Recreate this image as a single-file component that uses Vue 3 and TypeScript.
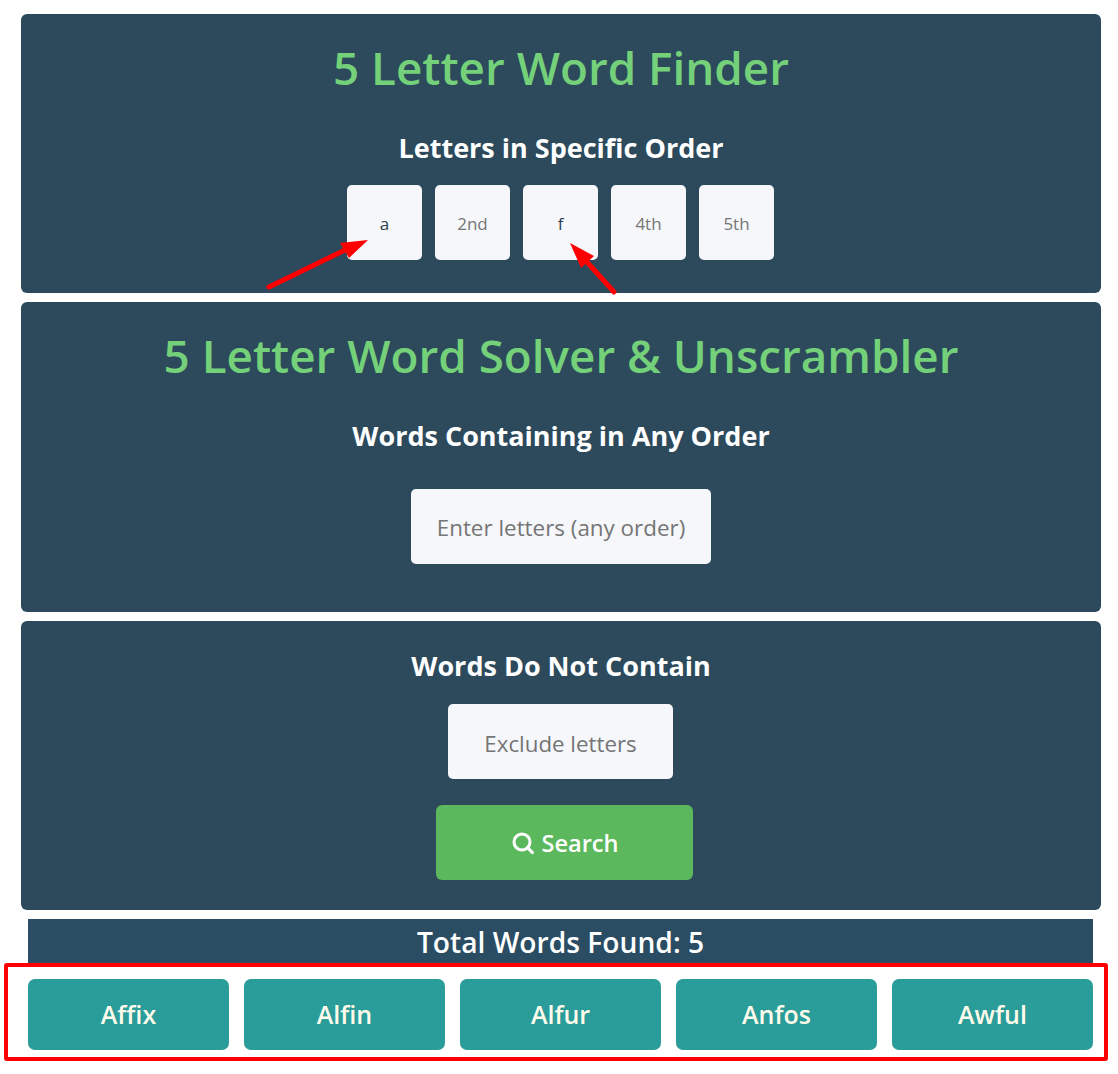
<script setup lang="ts">
interface LetterBox {
  value: string;
  placeholder: string;
}

const letters: LetterBox[] = [
  { value: 'a', placeholder: '1st' },
  { value: '', placeholder: '2nd' },
  { value: 'f', placeholder: '3rd' },
  { value: '', placeholder: '4th' },
  { value: '', placeholder: '5th' },
];

const results: string[] = ['Affix', 'Alfin', 'Alfur', 'Anfos', 'Awful'];
</script>

<template>
  <div class="page">
    <section class="card card-order">
      <h1 class="title">5 Letter Word Finder</h1>
      <h2 class="subtitle">Letters in Specific Order</h2>
      <div class="letter-row">
        <input
          v-for="(l, i) in letters"
          :key="i"
          class="field letter"
          :class="{ filled: l.value }"
          type="text"
          :value="l.value"
          :placeholder="l.placeholder"
        />
      </div>
    </section>

    <section class="card card-any">
      <h1 class="title">5 Letter Word Solver &amp; Unscrambler</h1>
      <h2 class="subtitle">Words Containing in Any Order</h2>
      <input class="field any-input" type="text" placeholder="Enter letters (any order)" />
    </section>

    <section class="card card-exclude">
      <h2 class="subtitle">Words Do Not Contain</h2>
      <input class="field exclude-input" type="text" placeholder="Exclude letters" />
      <button class="search-btn" type="button">
        <svg class="search-icon" viewBox="0 0 22 22" width="22" height="22" fill="none" stroke="currentColor" stroke-width="3">
          <circle cx="10" cy="10" r="8" />
          <path d="M15.6 15.6 L20.4 20.6" stroke-linecap="round" />
        </svg>
        Search
      </button>
    </section>

    <div class="total">Total Words Found: 5</div>

    <div class="results">
      <button v-for="word in results" :key="word" class="word" type="button">{{ word }}</button>
    </div>

    <div class="red-box"></div>
    <svg class="arrows" width="1118" height="1074" viewBox="0 0 1118 1074">
      <path d="M269 287 L345 250" stroke="#ff0000" stroke-width="5" stroke-linecap="round" />
      <polygon points="368,240 340,243 349,258" fill="#ff0000" />
      <path d="M614 292 L587 262" stroke="#ff0000" stroke-width="5" stroke-linecap="round" />
      <polygon points="570,243 594,256 581,268" fill="#ff0000" />
    </svg>
  </div>
</template>

<style>
html,
body {
  margin: 0;
  background: #ffffff;
}
</style>

<style scoped>
.page {
  position: relative;
  width: 1118px;
  height: 1074px;
  box-sizing: border-box;
  padding: 14px 17px 0 21px;
  overflow: hidden;
  font-family: "Open Sans", "Noto Sans", sans-serif;
}

.card {
  display: flex;
  flex-direction: column;
  align-items: center;
  box-sizing: border-box;
  width: 1080px;
  background: #2c4a5c;
  border-radius: 6px;
  margin-bottom: 9px;
  color: #ffffff;
}

.card-order {
  height: 279px;
  padding-top: 20px;
}

.card-any {
  height: 310px;
  padding-top: 20px;
}

.card-exclude {
  height: 289px;
  padding-top: 27px;
}

.title {
  margin: 0 0 2px;
  font-size: 45.8px;
  line-height: 67px;
  font-weight: 600;
  color: #74d17a;
}

.subtitle {
  margin: 0;
  font-size: 27px;
  line-height: 36px;
  font-weight: 700;
  color: #ffffff;
}

.card-order .subtitle {
  margin-top: 27px;
  margin-bottom: 19px;
}

.card-any .subtitle {
  margin-top: 27px;
  margin-bottom: 35px;
}

.card-exclude .subtitle {
  margin-bottom: 20px;
}

.letter-row {
  display: flex;
  gap: 13px;
  margin-left: -1px;
}

.field {
  box-sizing: border-box;
  height: 75px;
  border: none;
  outline: none;
  border-radius: 5px;
  background: #f5f7fa;
  text-align: center;
  font-family: inherit;
  color: #2c3e50;
  padding: 2px 10px 0;
}

.field::placeholder {
  color: #757575;
  opacity: 1;
}

.letter {
  width: 75px;
  font-size: 17px;
}

.any-input {
  width: 300px;
  font-size: 22.4px;
}

.exclude-input {
  width: 225px;
  font-size: 22.3px;
  margin-left: -1px;
  padding-top: 4px;
}

.search-btn {
  display: flex;
  align-items: center;
  justify-content: center;
  gap: 7px;
  width: 257px;
  height: 75px;
  padding-left: 8px;
  margin: 26px 0 0 7px;
  border: none;
  border-radius: 6px;
  background: #5cb85c;
  color: #ffffff;
  font-family: inherit;
  font-size: 23.6px;
  font-weight: 600;
}

.search-icon {
  flex: none;
}

.total {
  box-sizing: border-box;
  width: 1065px;
  height: 45px;
  margin: 0 0 15px 7px;
  background: #2a4d63;
  color: #ffffff;
  text-align: center;
  font-size: 28.2px;
  font-weight: 600;
  line-height: 47px;
}

.results {
  display: grid;
  grid-template-columns: repeat(5, 201px);
  gap: 15px;
  margin: 0 0 0 7px;
}

.word {
  height: 71px;
  padding: 0 0 2px;
  border: none;
  border-radius: 7px;
  background: #2a9c9a;
  color: #fffbea;
  font-family: inherit;
  font-size: 25px;
  font-weight: 600;
}

.red-box {
  position: absolute;
  left: 4px;
  top: 963px;
  width: 1104px;
  height: 98px;
  box-sizing: border-box;
  border: 4px solid #ff0000;
  border-radius: 3px;
  pointer-events: none;
}

.arrows {
  position: absolute;
  left: 0;
  top: 0;
  pointer-events: none;
}
</style>
